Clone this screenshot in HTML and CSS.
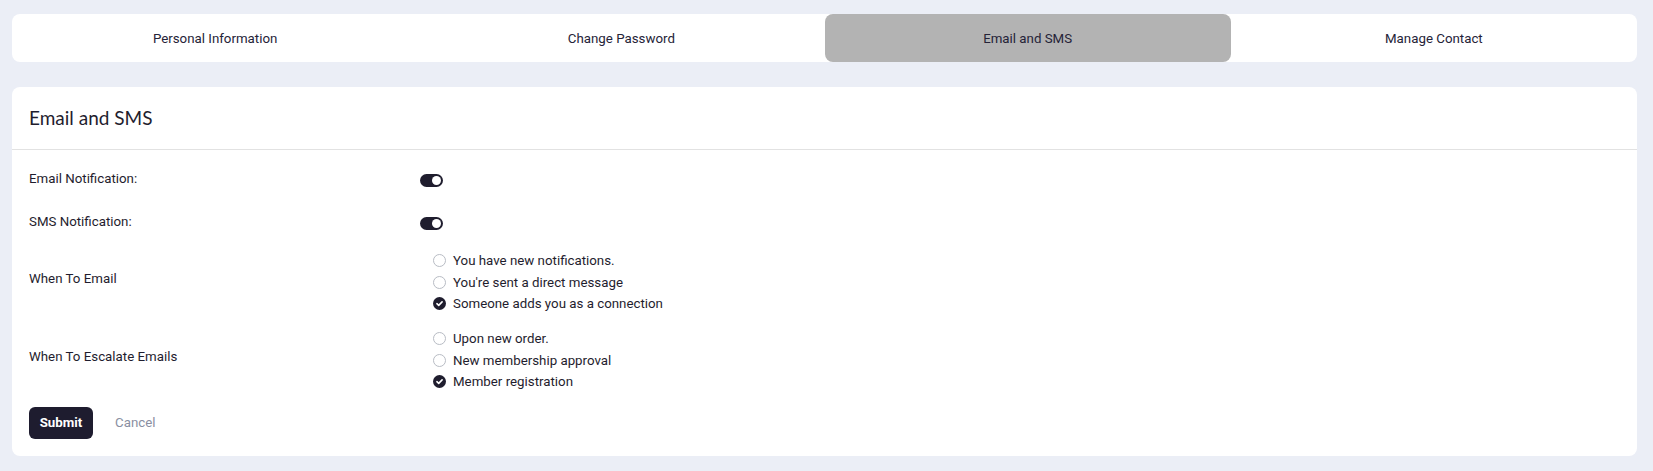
FILE: index.html
```html
<!DOCTYPE html>
<html>
<head>
<meta charset="utf-8">
<link rel="stylesheet" href="styles.css">
</head>
<body>
<div class="page">
  <nav class="tabs">
    <div class="tab">Personal Information</div>
    <div class="tab">Change Password</div>
    <div class="tab active">Email and SMS</div>
    <div class="tab">Manage Contact</div>
  </nav>
  <section class="card">
    <header class="card-head">Email and SMS</header>
    <div class="card-body">
      <div class="row row-toggle">
        <div class="label">Email Notification:</div>
        <div class="control"><span class="toggle"><span class="knob"></span></span></div>
      </div>
      <div class="row row-toggle second">
        <div class="label">SMS Notification:</div>
        <div class="control"><span class="toggle"><span class="knob"></span></span></div>
      </div>
      <div class="row row-group first-group">
        <div class="label">When To Email</div>
        <div class="control">
          <ul class="options">
            <li><span class="radio"></span>You have new notifications.</li>
            <li><span class="radio"></span>You're sent a direct message</li>
            <li><span class="radio checked"><svg viewBox="0 0 13 13" width="13" height="13"><path d="M3.9 6.7 L5.7 8.4 L9.1 4.9" fill="none" stroke="#fff" stroke-width="1.6" stroke-linecap="round" stroke-linejoin="round"/></svg></span>Someone adds you as a connection</li>
          </ul>
        </div>
      </div>
      <div class="row row-group second-group">
        <div class="label">When To Escalate Emails</div>
        <div class="control">
          <ul class="options">
            <li><span class="radio"></span>Upon new order.</li>
            <li><span class="radio"></span>New membership approval</li>
            <li><span class="radio checked"><svg viewBox="0 0 13 13" width="13" height="13"><path d="M3.9 6.7 L5.7 8.4 L9.1 4.9" fill="none" stroke="#fff" stroke-width="1.6" stroke-linecap="round" stroke-linejoin="round"/></svg></span>Member registration</li>
          </ul>
        </div>
      </div>
      <div class="actions">
        <button class="btn-submit">Submit</button>
        <button class="btn-cancel">Cancel</button>
      </div>
    </div>
  </section>
</div>
</body>
</html>
```

FILE: styles.css
```css
* { box-sizing: border-box; }
html, body { margin: 0; padding: 0; }
body {
  background: #ebeef6;
  font-family: Roboto, "Liberation Sans", sans-serif;
  color: #1f1d2e;
  font-size: 13.3px;
}
.page {
  padding: 14px 16px 16px 12px;
}
.tabs {
  display: grid;
  grid-template-columns: repeat(4, 1fr);
  background: #fff;
  border-radius: 8px;
  height: 48px;
}
.tab {
  display: flex;
  align-items: center;
  justify-content: center;
  font-size: 13.3px;
  color: #252338;
  border-radius: 8px;
}
.tab.active {
  background: #b3b3b3;
}
.card {
  margin-top: 25px;
  background: #fff;
  border-radius: 8px;
}
.card-head {
  height: 63px;
  padding-left: 17px;
  display: flex;
  align-items: center;
  padding-bottom: 2px;
  font-family: Lato, "Open Sans", sans-serif;
  font-size: 19px;
  font-weight: 400;
  color: #1f1d2e;
  border-bottom: 1px solid #e2e2e2;
}
.card-body {
  padding: 19px 17px 17px 17px;
}
.row {
  display: grid;
  grid-template-columns: 391px 1fr;
  align-items: center;
}
.row-toggle {
  height: 20px;
}
.row-toggle .label { padding-bottom: 2px; }
.row-toggle.second { margin-top: 23px; }
.row-group.first-group { margin-top: 18px; }
.row-group.second-group { margin-top: 13px; }
.row-group .label { padding-bottom: 6px; }
.label {
  line-height: 20px;
  color: #1f1d2e;
}
.control {
  display: flex;
  align-items: center;
}
.toggle {
  position: relative;
  display: inline-block;
  width: 23px;
  height: 13px;
  border-radius: 7px;
  background: #1f1d2e;
}
.knob {
  position: absolute;
  right: 2px;
  top: 2px;
  width: 9px;
  height: 9px;
  border-radius: 50%;
  background: #fff;
}
.options {
  list-style: none;
  margin: 0;
  padding: 0 0 0 13px;
}
.options li {
  display: flex;
  align-items: center;
  height: 21.6px;
  color: #1f1d2e;
}
.radio {
  width: 13px;
  height: 13px;
  border: 1px solid #b8bcc4;
  border-radius: 50%;
  margin-right: 7px;
  flex: none;
  display: inline-flex;
}
.radio.checked {
  border: none;
  background: #1f1d2e;
}
.radio svg { display: block; }
.actions {
  margin-top: 14px;
  display: flex;
  align-items: center;
}
.btn-submit {
  height: 32px;
  width: 64px;
  border: none;
  border-radius: 6px;
  background: #1e1c2f;
  color: #fff;
  font-family: Roboto, "Liberation Sans", sans-serif;
  font-weight: 700;
  font-size: 13.3px;
  padding: 0;
}
.btn-cancel {
  margin-left: 22px;
  border: none;
  background: none;
  padding: 0;
  font-family: Roboto, "Liberation Sans", sans-serif;
  font-size: 13.3px;
  color: #8a8fa2;
}
```
